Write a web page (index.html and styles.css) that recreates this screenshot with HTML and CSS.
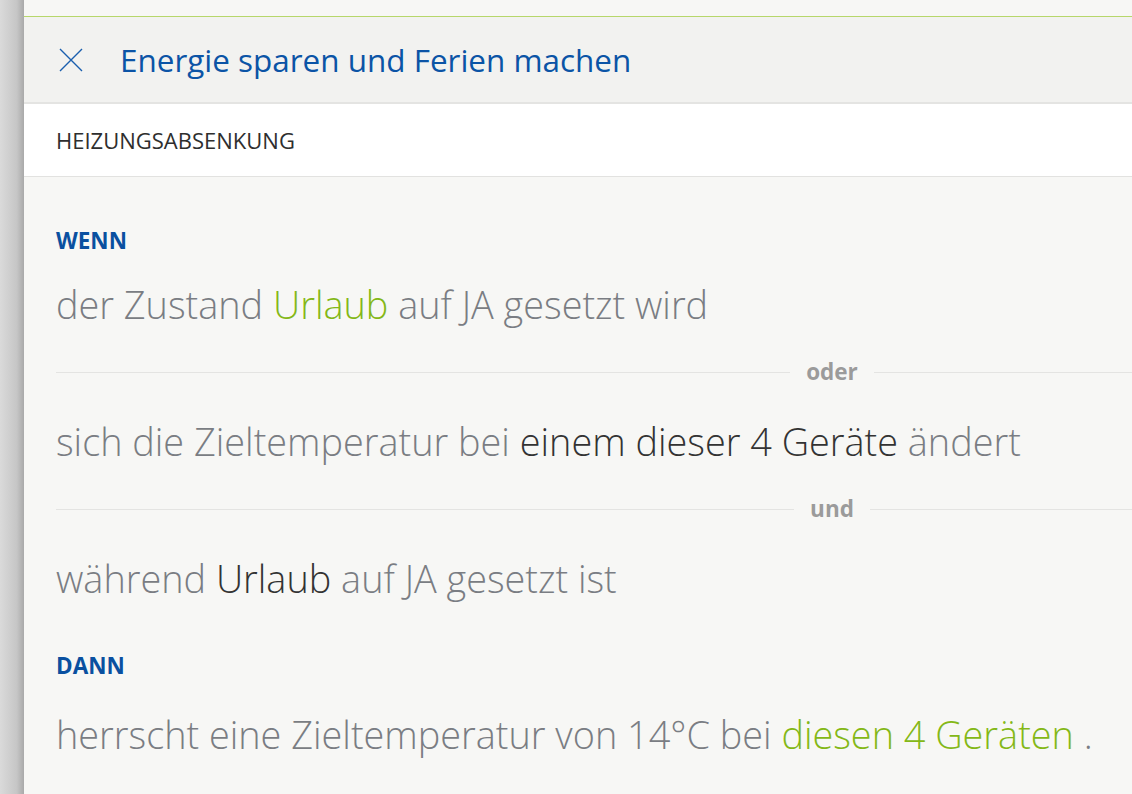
FILE: index.html
```html
<!DOCTYPE html>
<html lang="de">
<head>
<meta charset="utf-8">
<title>Energie sparen und Ferien machen</title>
<link rel="stylesheet" href="styles.css">
</head>
<body>
<div class="page">
  <div class="shade"></div>
  <main class="panel">
    <div class="topgap"></div>
    <header class="header">
      <svg class="close" width="24" height="24" viewBox="0 0 24 24" aria-hidden="true">
        <path d="M1 1 L23 23 M23 1 L1 23" stroke="#1a5fae" stroke-width="1.4" fill="none"/>
      </svg>
      <h1 class="title">Energie sparen und Ferien machen</h1>
    </header>
    <div class="section">HEIZUNGSABSENKUNG</div>
    <div class="content">
      <div class="label label-wenn">WENN</div>
      <p class="rule rule-1">der Zustand <span class="green">Urlaub</span> auf JA gesetzt wird</p>
      <div class="sep"><span class="sep-line"></span><span class="sep-text">oder</span><span class="sep-line"></span></div>
      <p class="rule">sich die Zieltemperatur bei <span class="dark">einem dieser 4 Geräte</span> ändert</p>
      <div class="sep"><span class="sep-line"></span><span class="sep-text">und</span><span class="sep-line"></span></div>
      <p class="rule">während <span class="dark">Urlaub</span> auf JA gesetzt ist</p>
      <div class="label label-dann">DANN</div>
      <p class="rule rule-last">herrscht eine Zieltemperatur von 14°C bei <span class="green">diesen 4 Geräten</span> .</p>
    </div>
  </main>
</div>
</body>
</html>
```

FILE: styles.css
```css
html, body {
  margin: 0;
  padding: 0;
}
body {
  width: 1132px;
  height: 794px;
  overflow: hidden;
  background: #f7f7f5;
  font-family: "Open Sans", "Noto Sans", sans-serif;
}
.page {
  display: flex;
  height: 794px;
}
.shade {
  flex: 0 0 24px;
  background: linear-gradient(to right, #dadada 0%, #c6c6c6 70%, #a9a9a9 100%);
}
.panel {
  flex: 1 1 auto;
  min-width: 0;
  overflow: hidden;
  background: #f7f7f5;
}
.topgap {
  height: 16px;
}
.header {
  height: 85px;
  border-top: 1px solid #b7d76b;
  border-bottom: 2px solid #e4e4e2;
  background: #f2f2f0;
  display: flex;
  align-items: center;
  padding-left: 35px;
  gap: 37px;
}
.close {
  flex: 0 0 24px;
  display: block;
}
.title {
  margin: 0;
  font-size: 31.45px;
  font-weight: 400;
  color: #0b54a6;
}
.section {
  height: 72px;
  background: #ffffff;
  border-bottom: 1px solid #e2e2e0;
  display: flex;
  align-items: center;
  padding-left: 32px;
  font-size: 22px;
  color: #2e2e2e;
}
.content {
  padding: 50px 0 0 32px;
}
.label {
  font-size: 22.5px;
  line-height: 28px;
  font-weight: 700;
  color: #0a50a0;
}
.rule {
  margin: 25px 0 0;
  font-size: 37.85px;
  line-height: 50px;
  font-weight: 300;
  color: #7a7d83;
  white-space: nowrap;
}
.green {
  color: #84b817;
}
.dark {
  color: #333333;
}
.sep {
  width: 1552px;
  height: 24px;
  margin: 30px 0 33px;
  display: flex;
  align-items: center;
  gap: 16px;
}
.sep-line {
  flex: 1 1 0;
  height: 1px;
  background: #e4e4e2;
}
.sep-text {
  font-size: 22.5px;
  line-height: 24px;
  font-weight: 700;
  color: #9b9b9b;
}
.sep + .rule {
  margin-top: 0;
}
.label-dann {
  margin-top: 48px;
}
.rule-last {
  margin-top: 30px;
}
```
